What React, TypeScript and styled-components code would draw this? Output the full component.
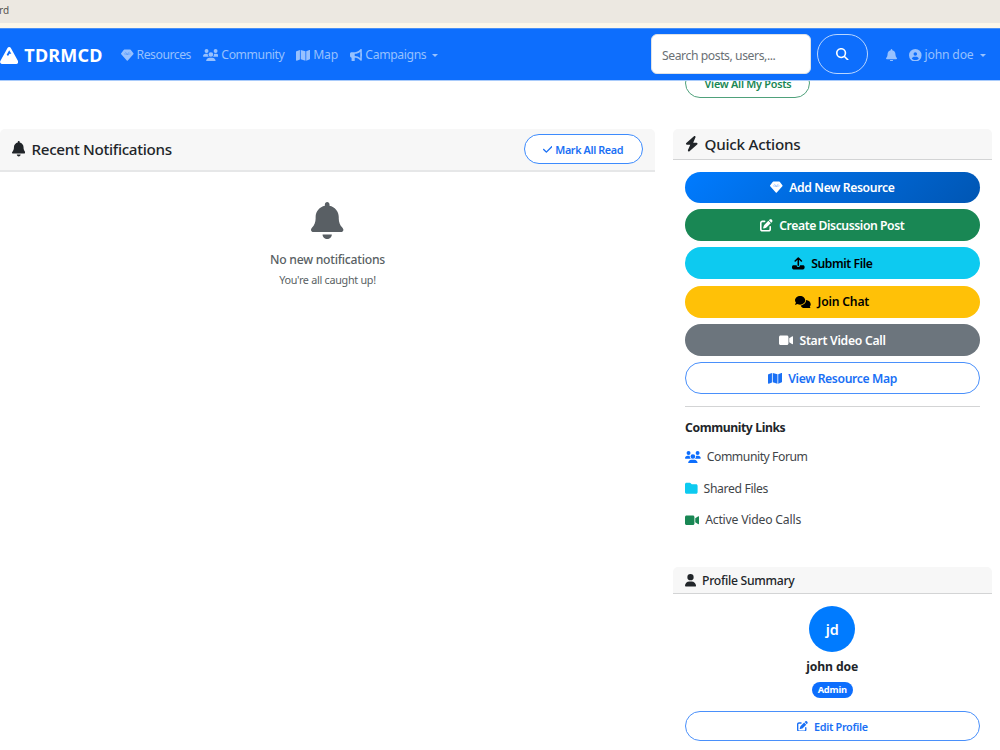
import React from "react";
import styled, { createGlobalStyle, css } from "styled-components";
import {
  FaBell, FaBolt, FaBullhorn, FaCheck, FaCircleUser, FaComments, FaFolder,
  FaMagnifyingGlass, FaMap, FaPenToSquare, FaUser, FaUsers, FaVideo,
} from "react-icons/fa6";

const GlobalStyle = createGlobalStyle`
  *, *::before, *::after { box-sizing: border-box; }
  body {
    margin: 0;
    background: #fff;
    color: #212529;
    font-family: "Noto Sans", "Open Sans", sans-serif;
    font-size: 12.2px;
    line-height: 18px;
  }
  svg { display: block; flex: none; }
`;

const Page = styled.div`
  width: 1000px;
  height: 750px;
  overflow: hidden;
  display: flex;
  flex-direction: column;
`;

const Text = styled.span<{ $track?: number }>`
  letter-spacing: ${(p) => p.$track ?? 0}px;
  white-space: nowrap;
`;

const Glyph = styled.span<{ $size?: number; $ratio?: number; $color?: string }>`
  display: flex;
  flex: none;
  color: ${(p) => p.$color ?? "inherit"};
  svg {
    height: ${(p) => p.$size ?? 12.6}px;
    width: ${(p) => (p.$size ?? 12.6) * (p.$ratio ?? 1)}px;
  }
`;

const TabStrip = styled.div`
  flex: none;
  height: 28px;
  background: #ece8e1;
  border-bottom: 5px solid #fdf7e9;
  color: #55534f;
  font-size: 10px;
  line-height: 20px;
  text-indent: -1px;
`;

const Navbar = styled.nav`
  flex: none;
  position: relative;
  z-index: 1;
  height: 52px;
  display: flex;
  align-items: center;
  background: #0d6efd;
  color: #fff;
  box-shadow: inset 0 1px 0 #4a90f5, 0 1px 0 #a9cbfb;
`;

const Brand = styled.div`
  display: flex;
  align-items: center;
  gap: 6px;
  width: 121px;
  padding-top: 2px;
  font-size: 18px;
  font-weight: 700;
`;

const NavLinks = styled.div`
  flex: 1;
  display: flex;
  gap: 11.7px;
  padding-top: 2px;
`;

const NavLink = styled.a`
  display: flex;
  align-items: center;
  gap: 3px;
  color: #97c1fe;
`;

const Caret = styled.i`
  margin-left: 3px;
  border: 3.5px solid transparent;
  border-top-color: currentColor;
  border-bottom: 0;
`;

const SearchBox = styled.div`
  width: 160px;
  height: 40px;
  padding: 0 10px;
  border: 1px solid #dee2e6;
  border-radius: 6px;
  background: #fff;
  color: #6a7075;
  line-height: 41px;
`;

const SearchButton = styled.button`
  width: 51px;
  height: 40px;
  margin: 0 18px 0 6px;
  padding: 0;
  display: flex;
  align-items: center;
  justify-content: center;
  border: 1px solid #b9d6ff;
  border-radius: 20px;
  background: transparent;
  color: #fff;
`;

const UserLinks = styled.div`
  display: flex;
  gap: 12px;
  width: 114px;
  padding-top: 2px;
`;

const Columns = styled.main`
  flex: 1;
  display: grid;
  grid-template-columns: 655px 318.5px;
  column-gap: 18px;
  align-items: start;
`;

const LeftColumn = styled.section`
  padding-top: 49px;
`;

const RightColumn = styled.section`
  display: flex;
  flex-direction: column;
`;

const PostsButton = styled.button`
  align-self: flex-start;
  width: 125px;
  height: 30px;
  margin: -12px 0 31px 12px;
  padding: 0 0 0 1px;
  border: 1px solid #4fa17b;
  border-radius: 15px;
  background: #fff;
  color: #198754;
  font: 600 10.8px/29px "Noto Sans", sans-serif;
`;

const PanelHeader = styled.header<{ $height: number; $thick?: boolean; $small?: boolean }>`
  height: ${(p) => p.$height}px;
  padding: ${(p) => (p.$small ? "1px 12px 0 11.5px" : "0 12px 0 11.5px")};
  display: flex;
  align-items: center;
  gap: 6.5px;
  background: #f7f7f7;
  border-bottom: ${(p) => (p.$thick ? "2px solid #e6e7e8" : "1px solid #d3d4d5")};
  border-radius: 5px 5px 0 0;
  font-weight: 500;
  font-size: ${(p) => (p.$small ? 12.2 : 15.2)}px;
  ${(p) => p.$thick && "padding-bottom: 1px;"}
`;

const MarkRead = styled.button`
  width: 119px;
  height: 30px;
  margin-left: auto;
  padding: 1px 1px 0 0;
  display: flex;
  align-items: center;
  justify-content: center;
  gap: 3px;
  border: 1px solid #3d8bfd;
  border-radius: 15px;
  background: #fff;
  color: #1a70f5;
  font: 600 10.8px "Noto Sans", sans-serif;
`;

const EmptyState = styled.div`
  padding-top: 30px;
  display: flex;
  flex-direction: column;
  align-items: center;
  color: #595f64;
`;

const EmptyTitle = styled.div`
  margin-top: 12px;
  font-weight: 500;
`;

const EmptyNote = styled.div`
  margin-top: 2px;
  font-size: 10.8px;
`;

const Actions = styled.div`
  padding: 12px 12px 0;
  display: flex;
  flex-direction: column;
  gap: 6.2px;
`;

const outline = css`
  background: #fff;
  border: 1px solid #4a90fb;
  color: #1a70f5;
`;

const Action = styled.button<{ $bg?: string; $fg?: string; $height?: number; $small?: boolean }>`
  height: ${(p) => p.$height ?? 32}px;
  width: 294.5px;
  padding: ${(p) => (p.$small ? 0 : 0.5)}px 0 0;
  display: flex;
  align-items: center;
  justify-content: center;
  gap: 6.5px;
  border: 0;
  border-radius: 16px;
  background: ${(p) => p.$bg};
  color: ${(p) => p.$fg ?? "#fff"};
  font: 600 ${(p) => (p.$small ? 10.8 : 12.2)}px "Noto Sans", sans-serif;
  ${(p) => !p.$bg && outline}
`;

const Links = styled.div`
  margin: 12px 12px 0;
  padding-top: 12px;
  border-top: 1px solid #d3d4d5;
`;

const LinksTitle = styled.h6`
  margin: 0 0 11px;
  font-size: 12.2px;
  font-weight: 700;
`;

const LinkRow = styled.a`
  display: flex;
  align-items: center;
  gap: 6px;
  height: 18px;
  margin-bottom: 13.7px;
  color: #3f4549;
`;

const Profile = styled.div`
  padding: 12px;
  display: flex;
  flex-direction: column;
  align-items: center;
`;

const Avatar = styled.div`
  width: 46px;
  height: 46px;
  border-radius: 50%;
  background: #007bff;
  color: #fff;
  font-size: 14.4px;
  font-weight: 600;
  line-height: 48px;
  text-align: center;
`;

const ProfileName = styled.div`
  margin-top: 6px;
  font-weight: 700;
`;

const Badge = styled.div`
  width: 41px;
  height: 16px;
  margin: 6px 0 13px;
  border-radius: 8px;
  background: #0d6efd;
  color: #fff;
  font-size: 9.3px;
  font-weight: 700;
  line-height: 16px;
  text-align: center;
`;

const Spacer = styled.div`
  height: 24px;
`;

const Mountain = () => (
  <svg viewBox="0 0 55 51">
    <path
      fill="currentColor"
      fillRule="evenodd"
      d="M27.5 0q3.500 0 5 2.800L54 42q1.500 3-.2 6T49 51H6q-3 0-4.800-3T1 42L22.500 2.800Q24 0 27.500 0zM27.500 10L20 23.500l4 3.500 4.500-6.500H34z"
    />
  </svg>
);

const Gem = () => (
  <svg viewBox="0 0 38 38">
    <path
      fill="currentColor"
      d="M10.200 1.800h17.600q1.300 0 2.100 1l7.500 10.200q1.100 1.500-.1 3L20.500 35q-1.500 1.600-3 0L.7 16q-1.200-1.500-.1-3L8.100 2.800q.8-1 2.100-1z"
    />
    <path d="M12.500 8.500L19 16l6.500-7.500M9 14.500l10 2 10-2" fill="none" stroke="#0d6efd" strokeOpacity=".5" strokeWidth="2" />
  </svg>
);

const Upload = () => (
  <svg viewBox="0 0 13 13">
    <path
      d="M6.500 8.600V1.200M3.300 4.100L6.500 1l3.200 3.100"
      fill="none"
      stroke="currentColor"
      strokeWidth="1.6"
      strokeLinecap="round"
      strokeLinejoin="round"
    />
    <path
      fill="currentColor"
      d="M1.600 8.400h3.200v.3a1.700 1.700 0 0 0 3.400 0v-.3h3.200c.9 0 1.600.7 1.600 1.600v1.200c0 .9-.7 1.600-1.600 1.600H1.600C.7 12.800 0 12.100 0 11.200V10c0-.9.7-1.600 1.600-1.600z"
    />
  </svg>
);

export default function App() {
  return (
    <>
      <GlobalStyle />
      <Page>
        <TabStrip>rd</TabStrip>
        <Navbar>
          <Brand>
            <Glyph $size={17} $ratio={1.08}><Mountain /></Glyph>
            <Text $track={0.2}>TDRMCD</Text>
          </Brand>
          <NavLinks>
            <NavLink><Glyph><Gem /></Glyph><Text $track={-0.47}>Resources</Text></NavLink>
            <NavLink><Glyph $ratio={1.25}><FaUsers /></Glyph><Text $track={-0.42}>Community</Text></NavLink>
            <NavLink><Glyph $ratio={1.125}><FaMap /></Glyph><Text $track={-0.15}>Map</Text></NavLink>
            <NavLink><Glyph><FaBullhorn /></Glyph><Text $track={-0.37}>Campaigns</Text><Caret /></NavLink>
          </NavLinks>
          <SearchBox><Text $track={-0.43}>Search posts, users,...</Text></SearchBox>
          <SearchButton><Glyph><FaMagnifyingGlass /></Glyph></SearchButton>
          <UserLinks>
            <NavLink><Glyph $ratio={0.875}><FaBell /></Glyph></NavLink>
            <NavLink><Glyph><FaCircleUser /></Glyph><Text $track={-0.2}>john doe</Text><Caret /></NavLink>
          </UserLinks>
        </Navbar>
        <Columns>
          <LeftColumn>
            <PanelHeader $height={43} $thick>
              <Glyph $size={15.4} $ratio={0.875}><FaBell /></Glyph>
              <Text $track={-0.31}>Recent Notifications</Text>
              <MarkRead><Glyph $size={10.8} $ratio={0.875}><FaCheck /></Glyph><Text $track={-0.37}>Mark All Read</Text></MarkRead>
            </PanelHeader>
            <EmptyState>
              <Glyph $size={37} $ratio={0.875}><FaBell /></Glyph>
              <EmptyTitle><Text $track={-0.25}>No new notifications</Text></EmptyTitle>
              <EmptyNote><Text $track={-0.28}>You're all caught up!</Text></EmptyNote>
            </EmptyState>
          </LeftColumn>
          <RightColumn>
            <PostsButton><Text $track={-0.24}>View All My Posts</Text></PostsButton>
            <PanelHeader $height={31}>
              <Glyph $size={15.4} $ratio={0.875}><FaBolt /></Glyph>
              <Text $track={-0.23}>Quick Actions</Text>
            </PanelHeader>
            <Actions>
              <Action $bg="linear-gradient(135deg, #007bff, #0056b3)" $height={31}>
                <Glyph><Gem /></Glyph><Text $track={-0.36}>Add New Resource</Text>
              </Action>
              <Action $bg="#198754"><Glyph><FaPenToSquare /></Glyph><Text $track={-0.43}>Create Discussion Post</Text></Action>
              <Action $bg="#0dcaf0" $fg="#000"><Glyph><Upload /></Glyph><Text $track={-0.42}>Submit File</Text></Action>
              <Action $bg="#ffc107" $fg="#000"><Glyph $ratio={1.25}><FaComments /></Glyph><Text $track={-0.2}>Join Chat</Text></Action>
              <Action $bg="#6c757d"><Glyph $ratio={1.125}><FaVideo /></Glyph><Text $track={-0.28}>Start Video Call</Text></Action>
              <Action><Glyph $ratio={1.125}><FaMap /></Glyph><Text $track={-0.38}>View Resource Map</Text></Action>
            </Actions>
            <Links>
              <LinksTitle><Text $track={-0.39}>Community Links</Text></LinksTitle>
              <LinkRow><Glyph $ratio={1.25} $color="#0d6efd"><FaUsers /></Glyph><Text $track={-0.45}>Community Forum</Text></LinkRow>
              <LinkRow><Glyph $color="#0dcaf0"><FaFolder /></Glyph><Text $track={-0.36}>Shared Files</Text></LinkRow>
              <LinkRow><Glyph $ratio={1.125} $color="#198754"><FaVideo /></Glyph><Text $track={-0.2}>Active Video Calls</Text></LinkRow>
            </Links>
            <Spacer />
            <PanelHeader $height={27} $small>
              <Glyph $ratio={0.875}><FaUser /></Glyph>
              <Text $track={-0.3}>Profile Summary</Text>
            </PanelHeader>
            <Profile>
              <Avatar>jd</Avatar>
              <ProfileName><Text $track={-0.1}>john doe</Text></ProfileName>
              <Badge><Text $track={-0.2}>Admin</Text></Badge>
              <Action $height={30} $small><Glyph $size={10.8}><FaPenToSquare /></Glyph><Text $track={-0.3}>Edit Profile</Text></Action>
            </Profile>
          </RightColumn>
        </Columns>
      </Page>
    </>
  );
}
